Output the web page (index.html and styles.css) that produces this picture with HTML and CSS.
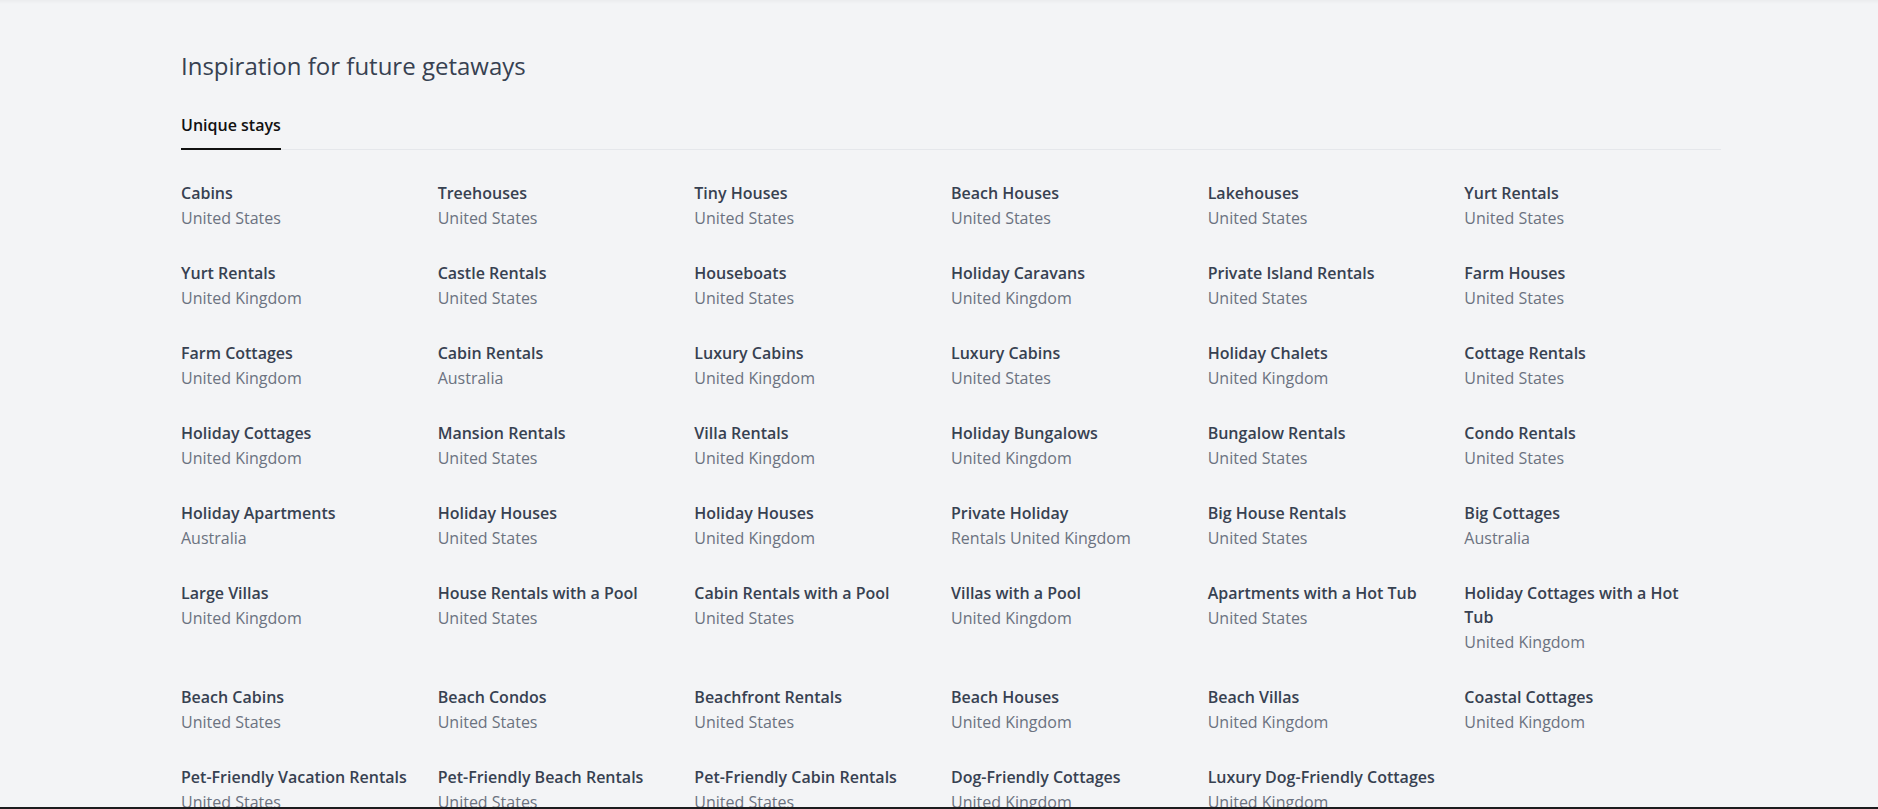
FILE: index.html
```html
<!DOCTYPE html>
<html lang="en">
<head>
<meta charset="utf-8">
<title>Inspiration for future getaways</title>
<link rel="stylesheet" href="styles.css">
</head>
<body>
<div class="top-shade"></div>
<main class="page">
  <h2 class="title">Inspiration for future getaways</h2>
  <div class="tabs">
    <div class="tab active">Unique stays</div>
  </div>
  <div class="grid">
    <div class="item"><div class="name">Cabins</div><div class="sub">United States</div></div>
    <div class="item"><div class="name">Treehouses</div><div class="sub">United States</div></div>
    <div class="item"><div class="name">Tiny Houses</div><div class="sub">United States</div></div>
    <div class="item"><div class="name">Beach Houses</div><div class="sub">United States</div></div>
    <div class="item"><div class="name">Lakehouses</div><div class="sub">United States</div></div>
    <div class="item"><div class="name">Yurt Rentals</div><div class="sub">United States</div></div>

    <div class="item"><div class="name">Yurt Rentals</div><div class="sub">United Kingdom</div></div>
    <div class="item"><div class="name">Castle Rentals</div><div class="sub">United States</div></div>
    <div class="item"><div class="name">Houseboats</div><div class="sub">United States</div></div>
    <div class="item"><div class="name">Holiday Caravans</div><div class="sub">United Kingdom</div></div>
    <div class="item"><div class="name">Private Island Rentals</div><div class="sub">United States</div></div>
    <div class="item"><div class="name">Farm Houses</div><div class="sub">United States</div></div>

    <div class="item"><div class="name">Farm Cottages</div><div class="sub">United Kingdom</div></div>
    <div class="item"><div class="name">Cabin Rentals</div><div class="sub">Australia</div></div>
    <div class="item"><div class="name">Luxury Cabins</div><div class="sub">United Kingdom</div></div>
    <div class="item"><div class="name">Luxury Cabins</div><div class="sub">United States</div></div>
    <div class="item"><div class="name">Holiday Chalets</div><div class="sub">United Kingdom</div></div>
    <div class="item"><div class="name">Cottage Rentals</div><div class="sub">United States</div></div>

    <div class="item"><div class="name">Holiday Cottages</div><div class="sub">United Kingdom</div></div>
    <div class="item"><div class="name">Mansion Rentals</div><div class="sub">United States</div></div>
    <div class="item"><div class="name">Villa Rentals</div><div class="sub">United Kingdom</div></div>
    <div class="item"><div class="name">Holiday Bungalows</div><div class="sub">United Kingdom</div></div>
    <div class="item"><div class="name">Bungalow Rentals</div><div class="sub">United States</div></div>
    <div class="item"><div class="name">Condo Rentals</div><div class="sub">United States</div></div>

    <div class="item"><div class="name">Holiday Apartments</div><div class="sub">Australia</div></div>
    <div class="item"><div class="name">Holiday Houses</div><div class="sub">United States</div></div>
    <div class="item"><div class="name">Holiday Houses</div><div class="sub">United Kingdom</div></div>
    <div class="item"><div class="name">Private Holiday</div><div class="sub">Rentals United Kingdom</div></div>
    <div class="item"><div class="name">Big House Rentals</div><div class="sub">United States</div></div>
    <div class="item"><div class="name">Big Cottages</div><div class="sub">Australia</div></div>

    <div class="item"><div class="name">Large Villas</div><div class="sub">United Kingdom</div></div>
    <div class="item"><div class="name">House Rentals with a Pool</div><div class="sub">United States</div></div>
    <div class="item"><div class="name">Cabin Rentals with a Pool</div><div class="sub">United States</div></div>
    <div class="item"><div class="name">Villas with a Pool</div><div class="sub">United Kingdom</div></div>
    <div class="item"><div class="name">Apartments with a Hot Tub</div><div class="sub">United States</div></div>
    <div class="item"><div class="name">Holiday Cottages with a Hot Tub</div><div class="sub">United Kingdom</div></div>

    <div class="item"><div class="name">Beach Cabins</div><div class="sub">United States</div></div>
    <div class="item"><div class="name">Beach Condos</div><div class="sub">United States</div></div>
    <div class="item"><div class="name">Beachfront Rentals</div><div class="sub">United States</div></div>
    <div class="item"><div class="name">Beach Houses</div><div class="sub">United Kingdom</div></div>
    <div class="item"><div class="name">Beach Villas</div><div class="sub">United Kingdom</div></div>
    <div class="item"><div class="name">Coastal Cottages</div><div class="sub">United Kingdom</div></div>

    <div class="item"><div class="name">Pet-Friendly Vacation Rentals</div><div class="sub">United States</div></div>
    <div class="item"><div class="name">Pet-Friendly Beach Rentals</div><div class="sub">United States</div></div>
    <div class="item"><div class="name">Pet-Friendly Cabin Rentals</div><div class="sub">United States</div></div>
    <div class="item"><div class="name">Dog-Friendly Cottages</div><div class="sub">United Kingdom</div></div>
    <div class="item"><div class="name">Luxury Dog-Friendly Cottages</div><div class="sub">United Kingdom</div></div>
  </div>
</main>
<div class="bottom-edge"></div>
</body>
</html>
```

FILE: styles.css
```css
html, body {
  margin: 0;
  padding: 0;
  height: 100%;
  overflow: hidden;
}

body {
  background: #f3f4f6;
  font-family: "Open Sans", "Noto Sans", "Liberation Sans", sans-serif;
  color: #374151;
}

.top-shade {
  height: 4px;
  background: linear-gradient(#ebecee, #f3f4f6);
}

.page {
  width: 1540px;
  padding-left: 181px;
  padding-top: 46px;
}

.title {
  margin: 0;
  font-size: 24px;
  line-height: 32px;
  font-weight: 500;
  color: #374151;
}

.tabs {
  display: flex;
  margin-top: 31px;
  border-bottom: 1px solid #e5e7eb;
}

.tab {
  font-size: 16px;
  line-height: 25.6px;
  font-weight: 600;
  color: #111111;
  padding-bottom: 9px;
  margin-bottom: -1px;
}

.tab.active {
  border-bottom: 2px solid #111111;
}

.grid {
  display: grid;
  grid-template-columns: repeat(6, 1fr);
  row-gap: 30px;
  margin-top: 31px;
}

.item {
  padding-right: 14px;
}

.name {
  font-size: 16px;
  line-height: 24px;
  font-weight: 600;
  color: #374151;
}

.sub {
  font-size: 16px;
  line-height: 26px;
  font-weight: 400;
  color: #6b7280;
}

.bottom-edge {
  position: fixed;
  left: 0;
  right: 0;
  bottom: 0;
  height: 2px;
  background: #1c1c1e;
}
```
